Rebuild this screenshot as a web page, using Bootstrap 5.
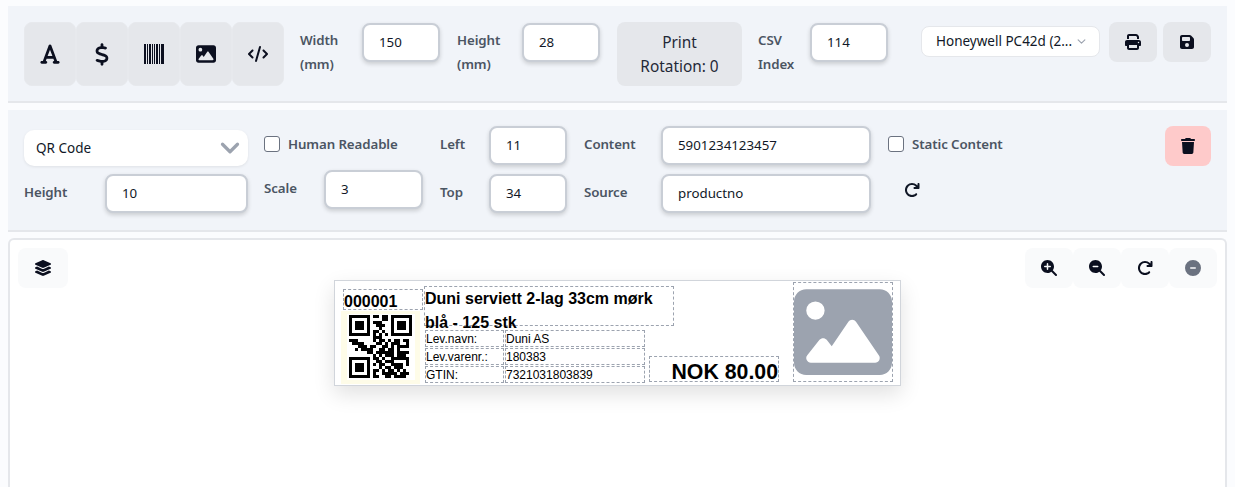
<!DOCTYPE html>
<html lang="en">
<head>
<meta charset="utf-8">
<title>Label designer</title>
<link href="https://cdn.jsdelivr.net/npm/bootstrap@5.3.0/dist/css/bootstrap.min.css" rel="stylesheet">
<style>
html,body{height:487px;overflow:hidden}
body{background:#fbfcfe;font-family:"Noto Sans","Open Sans",sans-serif;font-size:14px;color:#111827;padding:6px 8px 0}
.panel-bar{background:#f1f4f9;border-bottom:2px solid #e5e7eb;padding:16px;margin-bottom:7px}
.top-bar{height:97px}
.prop-bar{height:122px}
.tool-btn{width:52px;height:64px;background:#e5e7eb;border:1px solid #e7e9ed;border-radius:8px;padding:0;display:flex;align-items:center;justify-content:center;color:#111827}
.tool-btn svg,.sq-btn svg,.view-btn svg{fill:#0b0f1f;display:block}
.field-label{font-weight:600;color:#4b5563;line-height:24px;font-size:13.3px;letter-spacing:-.1px}
.row-lab{margin-bottom:3px}
.stack-lab{margin-top:6px}
.num-input.form-control{height:39px;border:2px solid #c9ced6;border-radius:8px;box-shadow:0 2px 4px rgba(0,0,0,.16);padding:0 15px 2px;font-size:13.3px;color:#111827;background:#fff}
.w78{width:78px;flex:none}.w143{width:143px}.w99{width:99px}.w210{width:210px}
.print-rot{width:125px;height:64px;background:#e5e7eb;border:0;border-radius:8px;font-size:15.4px;line-height:24px;color:#1f2937;padding:1px 0 0;margin:0 16px 0 17px}
.printer-sel.form-select{width:179px;height:31px;border:1px solid #e5e7eb;border-radius:8px;font-size:13.5px;padding:0 26px 0 14px;color:#111827;background-size:11px 9px;background-position:right 12px center;background-image:url("data:image/svg+xml,%3csvg xmlns='http://www.w3.org/2000/svg' viewBox='0 0 16 16'%3e%3cpath fill='none' stroke='%239ca3af' stroke-linecap='round' stroke-linejoin='round' stroke-width='2' d='m2 5 6 6 6-6'/%3e%3c/svg%3e")}
.sq-btn{width:48px;height:40px;background:#e5e7eb;border:0;border-radius:8px;padding:0;display:flex;align-items:center;justify-content:center}
.trash-btn{width:46px;background:#fecaca}
.type-sel.form-select{width:224px;height:36px;border:0;border-radius:10px;font-size:13.5px;padding:0 40px 0 12px;box-shadow:0 1px 3px rgba(0,0,0,.08);background-size:24px 20px;background-position:right 6px center;color:#111827;background-image:url("data:image/svg+xml,%3csvg xmlns='http://www.w3.org/2000/svg' viewBox='0 0 16 16'%3e%3cpath fill='none' stroke='%239ca3af' stroke-linecap='round' stroke-linejoin='round' stroke-width='2.6' d='m2 5 6 6 6-6'/%3e%3c/svg%3e")}
.chk.form-check-input{width:16px;height:16px;margin:0 8px 0 0;border:1px solid #6b7280;border-radius:3px;flex:none}
.canvas-box{height:260px;background:#fff;border:2px solid #e5e7eb;border-bottom:0;border-radius:6px 6px 0 0;position:relative}
.view-btn{width:48px;height:40px;background:#f9fafb;border:0;padding:0;display:flex;align-items:center;justify-content:center;border-radius:8px}
.view-tools{position:absolute;top:8px;right:8px}
.layer-btn{position:absolute;top:8px;left:8px;width:50px}
.label-sheet{position:absolute;left:324px;top:40px;width:567px;height:106px;background:#fff;border:1px solid #d1d5db;box-shadow:0 8px 20px rgba(0,0,0,.12);font-family:"Liberation Sans",Arial,sans-serif;color:#000}
.lbl-el{position:absolute;border:1px dashed #9ca3af;overflow:visible;white-space:nowrap}
.lbl-text{font-size:12px;line-height:16px;padding-left:0}
.qr-wrap{position:absolute;left:6px;top:30px;width:79px;height:73px;background:#fefce8}
.qr-wrap svg{position:absolute;left:8px;top:4px}
.qr-bg{position:absolute;left:6px;top:3px;width:68px;height:66px;background:#fff}
</style>
</head>
<body>
<div class="panel-bar top-bar d-flex align-items-start">
  <div class="d-flex">
    <button class="tool-btn" aria-label="Text"><svg width="20" height="22" viewBox="0 0 448 512"><path d="M254 52.8C249.3 40.3 237.3 32 224 32s-25.3 8.3-30 20.8L57.8 416H32c-17.7 0-32 14.3-32 32s14.3 32 32 32h96c17.7 0 32-14.3 32-32s-14.3-32-32-32h-1.8l18-48H303.8l18 48H320c-17.7 0-32 14.3-32 32s14.3 32 32 32h96c17.7 0 32-14.3 32-32s-14.3-32-32-32H390.2L254 52.8zM279.8 304H168.2L224 155.1 279.8 304z"/></svg></button>
    <button class="tool-btn" aria-label="Price"><svg width="14" height="23" viewBox="0 0 320 512"><path d="M160 0c17.7 0 32 14.3 32 32V67.7c1.6 .2 3.1 .4 4.7 .7c.4 .1 .7 .1 1.1 .2l48 8.8c17.4 3.2 28.9 19.9 25.7 37.2s-19.9 28.9-37.2 25.7l-47.5-8.7c-31.3-4.6-58.9-1.5-78.3 6.2s-27.2 18.3-29 28.1c-2 10.7-.5 16.7 1.2 20.4c1.8 3.9 5.5 8.3 12.8 13.2c16.3 10.7 41.3 17.7 73.7 26.3l2.9 .8c28.6 7.6 63.6 16.8 89.6 33.8c14.2 9.3 27.6 21.9 35.9 39.5c8.5 17.9 10.3 37.9 6.4 59.2c-6.9 38-33.1 63.4-65.6 76.7c-13.7 5.6-28.6 9.2-44.4 11V480c0 17.7-14.3 32-32 32s-32-14.3-32-32V445.1c-.4-.1-.9-.1-1.3-.2l-.2 0 0 0c-24.4-3.8-64.5-14.3-91.5-26.3c-16.1-7.2-23.4-26.1-16.2-42.2s26.1-23.4 42.2-16.2c20.9 9.3 55.3 18.5 75.2 21.6c31.9 4.7 58.2 2 76-5.3c16.9-6.9 24.6-16.9 26.8-28.9c1.9-10.6 .4-16.7-1.3-20.4c-1.9-4-5.6-8.4-13-13.3c-16.4-10.7-41.5-17.7-74-26.3l-2.8-.7 0 0C119.4 279.3 84.4 270 58.4 253c-14.2-9.3-27.5-22-35.8-39.6c-8.4-17.9-10.1-37.9-6.1-59.2C23.7 116 52.3 91.2 84.8 78.3c13.3-5.3 27.9-8.9 43.2-11V32c0-17.7 14.3-32 32-32z"/></svg></button>
    <button class="tool-btn" aria-label="Barcode"><svg width="20" height="20" viewBox="0 0 20 20"><path d="M0 0h2v20H0zM3 0h1v20H3zM5 0h2v20H5zM8 0h1v20H8zM10 0h1v20h-1zM12 0h2v20h-2zM15 0h1v20h-1zM17 0h3v20h-3z"/></svg></button>
    <button class="tool-btn" aria-label="Image"><svg width="20" height="20" viewBox="0 0 512 512"><path d="M0 96C0 60.7 28.7 32 64 32H448c35.3 0 64 28.7 64 64V416c0 35.3-28.7 64-64 64H64c-35.3 0-64-28.7-64-64V96zM323.8 202.5c-4.5-6.6-11.9-10.5-19.8-10.5s-15.4 3.9-19.8 10.5l-87 127.6L170.7 297c-4.6-5.7-11.5-9-18.7-9s-14.2 3.3-18.7 9l-64 80c-5.8 7.2-6.9 17.1-2.9 25.4s12.4 13.6 21.6 13.6h96 32H424c8.9 0 17.1-4.9 21.2-12.8s3.6-17.4-1.4-24.7l-120-176zM112 192a48 48 0 1 0 0-96 48 48 0 1 0 0 96z"/></svg></button>
    <button class="tool-btn" aria-label="Code"><svg width="20" height="16" viewBox="0 0 640 512"><path d="M392.8 1.2c-17-4.9-34.7 5-39.6 22l-128 448c-4.9 17 5 34.7 22 39.6s34.7-5 39.6-22l128-448c4.9-17-5-34.7-22-39.6zm80.6 120.1c-12.5 12.5-12.5 32.8 0 45.3L562.7 256l-89.4 89.4c-12.5 12.5-12.5 32.8 0 45.3s32.8 12.5 45.3 0l112-112c12.5-12.5 12.5-32.8 0-45.3l-112-112c-12.5-12.5-32.8-12.5-45.3 0zm-306.7 0c-12.5-12.5-32.8-12.5-45.3 0l-112 112c-12.5 12.5-12.5 32.8 0 45.3l112 112c12.5 12.5 32.8 12.5 45.3 0s12.5-32.8 0-45.3L77.3 256l89.4-89.4c12.5-12.5 12.5-32.8 0-45.3z"/></svg></button>
  </div>
  <div class="field-label stack-lab ms-3" style="width:46px">Width (mm)</div>
  <input class="form-control num-input w78 ms-3" value="150" style="margin-top:1px">
  <div class="field-label stack-lab" style="width:49px;margin-left:17px">Height (mm)</div>
  <input class="form-control num-input w78 ms-3" value="28" style="margin-top:1px">
  <button class="print-rot">Print<br>Rotation: 0</button>
  <div class="field-label stack-lab" style="width:36px">CSV Index</div>
  <input class="form-control num-input w78 ms-3" value="114" style="margin-top:1px">
  <select class="form-select printer-sel" style="margin:4px 9px 0 33px"><option>Honeywell PC42d (2...</option></select>
  <button class="sq-btn me-1" aria-label="Print"><svg width="16" height="16" viewBox="0 0 512 512"><path d="M128 0C92.7 0 64 28.7 64 64v96h64V64H354.7L384 93.3V160h64V93.3c0-17-6.7-33.3-18.7-45.3L400 18.7C388 6.7 371.7 0 354.7 0H128zM384 352v32 64H128V384 368 352H384zm64 32h32c17.7 0 32-14.3 32-32V256c0-35.3-28.7-64-64-64H64c-35.3 0-64 28.7-64 64v96c0 17.7 14.3 32 32 32H64v64c0 35.3 28.7 64 64 64H384c35.3 0 64-28.7 64-64V384zM432 248a24 24 0 1 1 0 48 24 24 0 1 1 0-48z"/></svg></button>
  <button class="sq-btn" style="margin-left:2px" aria-label="Save"><svg width="14" height="16" viewBox="0 0 448 512"><path d="M64 32C28.7 32 0 60.7 0 96V416c0 35.3 28.7 64 64 64H384c35.3 0 64-28.7 64-64V173.3c0-17-6.7-33.3-18.7-45.3L352 50.7C340 38.7 323.7 32 306.7 32H64zm0 96c0-17.7 14.3-32 32-32H288c17.7 0 32 14.3 32 32v64c0 17.7-14.3 32-32 32H96c-17.7 0-32-14.3-32-32V128zM224 288a64 64 0 1 1 0 128 64 64 0 1 1 0-128z"/></svg></button>
</div>

<div class="panel-bar prop-bar d-flex align-items-start mb-0">
  <div class="d-flex flex-column" style="width:224px;padding-top:4px;gap:8px">
    <select class="form-select type-sel"><option>QR Code</option></select>
    <div class="d-flex align-items-center justify-content-between">
      <span class="field-label row-lab">Height</span>
      <input class="form-control num-input w143" value="10">
    </div>
  </div>
  <div class="d-flex flex-column" style="width:159px;margin-left:16px;gap:5px">
    <div class="d-flex align-items-center" style="height:39px;padding-bottom:3px">
      <input type="checkbox" class="form-check-input chk" aria-label="Human Readable"><span class="field-label">Human Readable</span>
    </div>
    <div class="d-flex align-items-center justify-content-between">
      <span class="field-label row-lab">Scale</span>
      <input class="form-control num-input w99" value="3">
    </div>
  </div>
  <div class="d-flex flex-column" style="width:127px;margin-left:17px;gap:9px">
    <div class="d-flex align-items-center justify-content-between"><span class="field-label row-lab">Left</span><input class="form-control num-input w78" value="11"></div>
    <div class="d-flex align-items-center justify-content-between"><span class="field-label row-lab">Top</span><input class="form-control num-input w78" value="34"></div>
  </div>
  <div class="d-flex flex-column" style="width:287px;margin-left:17px;gap:9px">
    <div class="d-flex align-items-center justify-content-between"><span class="field-label row-lab">Content</span><input class="form-control num-input w210" value="5901234123457"></div>
    <div class="d-flex align-items-center justify-content-between"><span class="field-label row-lab">Source</span><input class="form-control num-input w210" value="productno"></div>
  </div>
  <div class="d-flex flex-column" style="margin-left:17px;gap:9px">
    <div class="d-flex align-items-center" style="height:39px;padding-bottom:3px">
      <input type="checkbox" class="form-check-input chk" aria-label="Static Content"><span class="field-label">Static Content</span>
    </div>
    <div class="d-flex" style="padding:8px 0 0 16px"><svg width="16" height="16" viewBox="0 0 512 512" fill="#111827" aria-hidden="true"><path d="M386.3 160H336c-17.7 0-32 14.3-32 32s14.3 32 32 32H464c17.7 0 32-14.3 32-32V64c0-17.7-14.3-32-32-32s-32 14.3-32 32v51.2L414.4 97.6c-87.5-87.5-229.3-87.5-316.8 0s-87.5 229.3 0 316.8s229.3 87.5 316.8 0c12.5-12.5 12.5-32.8 0-45.3s-32.8-12.5-45.3 0c-62.5 62.5-163.8 62.5-226.3 0s-62.5-163.8 0-226.3s163.8-62.5 226.3 0L386.3 160z"/></svg></div>
  </div>
  <button class="sq-btn trash-btn ms-auto" aria-label="Delete"><svg width="14" height="16" viewBox="0 0 448 512"><path d="M135.2 17.7L128 32H32C14.3 32 0 46.3 0 64S14.3 96 32 96H416c17.7 0 32-14.3 32-32s-14.3-32-32-32H320l-7.2-14.3C307.4 6.8 296.3 0 284.2 0H163.8c-12.1 0-23.2 6.8-28.6 17.7zM416 128H32L53.2 467c1.6 25.3 22.6 45 47.9 45H346.9c25.3 0 46.3-19.7 47.9-45L416 128z"/></svg></button>
</div>

<div class="canvas-box" style="margin-top:6px">
  <button class="view-btn layer-btn" aria-label="Layers"><svg width="18" height="16" viewBox="0 0 576 512"><path d="M264.5 5.2c14.9-6.9 32.1-6.9 47 0l218.6 101c8.5 3.9 13.9 12.4 13.9 21.8s-5.4 17.9-13.9 21.8l-218.6 101c-14.9 6.9-32.1 6.9-47 0L45.9 149.8C37.4 145.8 32 137.3 32 128s5.4-17.9 13.9-21.8L264.5 5.2zM476.9 209.6l53.2 24.6c8.5 3.9 13.9 12.4 13.9 21.8s-5.4 17.9-13.9 21.8l-218.6 101c-14.9 6.9-32.1 6.9-47 0L45.9 277.8C37.4 273.8 32 265.3 32 256s5.4-17.9 13.9-21.8l53.2-24.6 152 70.2c23.4 10.8 50.4 10.8 73.8 0l152-70.2zm-152 198.2l152-70.2 53.2 24.6c8.5 3.9 13.9 12.4 13.9 21.8s-5.4 17.9-13.9 21.8l-218.6 101c-14.9 6.9-32.1 6.9-47 0L45.9 405.8C37.4 401.8 32 393.3 32 384s5.4-17.9 13.9-21.8l53.2-24.6 152 70.2c23.4 10.8 50.4 10.8 73.8 0z"/></svg></button>
  <div class="view-tools d-flex">
    <button class="view-btn" aria-label="Zoom in"><svg width="16" height="16" viewBox="0 0 512 512"><path d="M416 208c0 45.9-14.9 88.3-40 122.7L502.6 457.4c12.5 12.5 12.5 32.8 0 45.3s-32.8 12.5-45.3 0L330.7 376c-34.4 25.2-76.8 40-122.7 40C93.1 416 0 322.9 0 208S93.1 0 208 0S416 93.1 416 208zM184 296c0 13.3 10.7 24 24 24s24-10.7 24-24V232h64c13.3 0 24-10.7 24-24s-10.7-24-24-24H232V120c0-13.3-10.7-24-24-24s-24 10.7-24 24v64H120c-13.3 0-24 10.7-24 24s10.7 24 24 24h64v64z"/></svg></button>
    <button class="view-btn" aria-label="Zoom out"><svg width="16" height="16" viewBox="0 0 512 512"><path d="M416 208c0 45.9-14.9 88.3-40 122.7L502.6 457.4c12.5 12.5 12.5 32.8 0 45.3s-32.8 12.5-45.3 0L330.7 376c-34.4 25.2-76.8 40-122.7 40C93.1 416 0 322.9 0 208S93.1 0 208 0S416 93.1 416 208zM136 184c-13.3 0-24 10.7-24 24s10.7 24 24 24H280c13.3 0 24-10.7 24-24s-10.7-24-24-24H136z"/></svg></button>
    <button class="view-btn" aria-label="Rotate"><svg width="16" height="16" viewBox="0 0 512 512"><path d="M386.3 160H336c-17.7 0-32 14.3-32 32s14.3 32 32 32H464c17.7 0 32-14.3 32-32V64c0-17.7-14.3-32-32-32s-32 14.3-32 32v51.2L414.4 97.6c-87.5-87.5-229.3-87.5-316.8 0s-87.5 229.3 0 316.8s229.3 87.5 316.8 0c12.5-12.5 12.5-32.8 0-45.3s-32.8-12.5-45.3 0c-62.5 62.5-163.8 62.5-226.3 0s-62.5-163.8 0-226.3s163.8-62.5 226.3 0L386.3 160z"/></svg></button>
    <button class="view-btn" aria-label="Remove"><svg width="16" height="16" viewBox="0 0 512 512" style="fill:#6b7280"><path d="M256 512A256 256 0 1 0 256 0a256 256 0 1 0 0 512zM184 232H328c13.3 0 24 10.7 24 24s-10.7 24-24 24H184c-13.3 0-24-10.7-24-24s10.7-24 24-24z"/></svg></button>
  </div>

  <div class="label-sheet">
    <div class="qr-wrap"><div class="qr-bg"></div>
      <svg id="qrcode" width="63" height="63" viewBox="0 0 21 21" shape-rendering="crispEdges" aria-label="QR code"><path id="qrpath" fill="#000"/></svg>
    </div>
    <div class="lbl-el fw-bold" style="left:8px;top:8px;width:80px;height:21px;font-size:16px;line-height:24px">000001</div>
    <div class="lbl-el fw-bold" style="left:89px;top:5px;width:250px;height:40px;font-size:16px;line-height:24px;white-space:normal">Duni serviett 2-lag 33cm mørk blå - 125 stk</div>
    <div class="lbl-el lbl-text" style="left:90px;top:49px;width:79px;height:17px">Lev.navn:</div>
    <div class="lbl-el lbl-text" style="left:170px;top:49px;width:140px;height:17px">Duni AS</div>
    <div class="lbl-el lbl-text" style="left:90px;top:67px;width:79px;height:17px">Lev.varenr.:</div>
    <div class="lbl-el lbl-text" style="left:170px;top:67px;width:140px;height:17px">180383</div>
    <div class="lbl-el lbl-text" style="left:90px;top:85px;width:79px;height:17px">GTIN:</div>
    <div class="lbl-el lbl-text" style="left:170px;top:85px;width:140px;height:17px">7321031803839</div>
    <div class="lbl-el fw-bold text-end" style="left:314px;top:75px;width:130px;height:26px;font-size:21.3px;line-height:30px">NOK 80.00</div>
    <div class="lbl-el" style="left:458px;top:1px;width:100px;height:100px">
      <svg width="98" height="98" viewBox="0 0 512 512" fill="#9ca3af" class="d-block" aria-hidden="true"><path d="M0 96C0 60.7 28.7 32 64 32H448c35.3 0 64 28.7 64 64V416c0 35.3-28.7 64-64 64H64c-35.3 0-64-28.7-64-64V96zM323.8 202.5c-4.5-6.6-11.9-10.5-19.8-10.5s-15.4 3.9-19.8 10.5l-87 127.6L170.7 297c-4.6-5.7-11.5-9-18.7-9s-14.2 3.3-18.7 9l-64 80c-5.8 7.2-6.9 17.1-2.9 25.4s12.4 13.6 21.6 13.6h96 32H424c8.9 0 17.1-4.9 21.2-12.8s3.6-17.4-1.4-24.7l-120-176zM112 192a48 48 0 1 0 0-96 48 48 0 1 0 0 96z"/></svg>
    </div>
  </div>
</div>
<script>
var qr=["111111101101101111111","100000100001101000001","101110101110001011101","101110100111001011101","101110100010001011101","100000101101001000001","111111101010101111111","000000001110000000000","111000001011010110110","011110000110101110010","000111011001101011110","001011110011011010000","000000110111111011110","000000001010111011100","111111101101001111110","100000100110111000010","101110101011001111010","101110100010110111000","101110101101011010100","100000101001111101110","111111101100110111100"];
var d="";qr.forEach(function(r,y){for(var x=0;x<21;x++){if(r[x]==="1"){d+="M"+x+" "+y+"h1v1h-1z";}}});
document.getElementById("qrpath").setAttribute("d",d);
</script>
<script src="https://cdn.jsdelivr.net/npm/bootstrap@5.3.0/dist/js/bootstrap.bundle.min.js"></script>
</body>
</html>
